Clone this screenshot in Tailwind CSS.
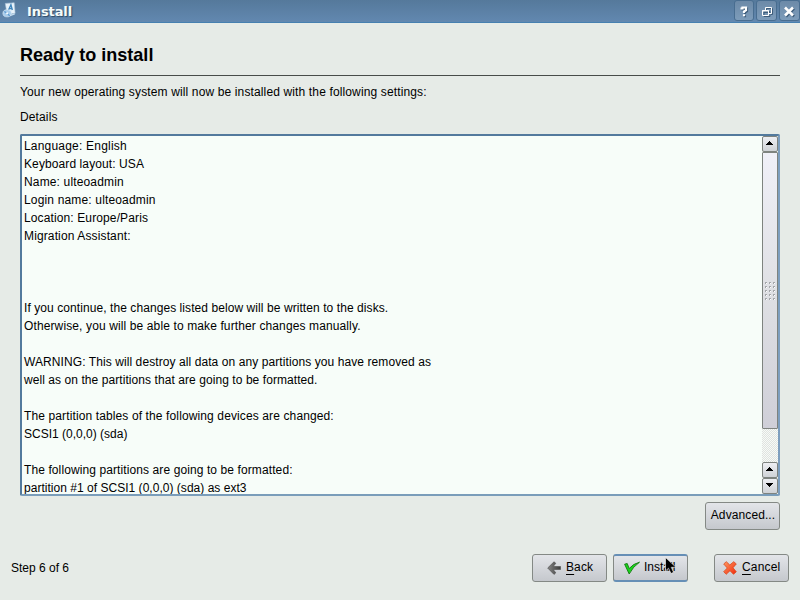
<!DOCTYPE html>
<html lang="en">
<head>
<meta charset="utf-8">
<title>Install</title>
<script src="https://cdn.jsdelivr.net/npm/@tailwindcss/browser@4"></script>
</head>
<body class="relative flex h-[600px] w-[800px] flex-col overflow-hidden bg-[#e6ebe7] font-['Liberation_Sans',Arial,sans-serif] text-[12px] leading-[18px] text-black">
  <header class="flex h-[23px] shrink-0 items-start border-b border-[#4680b0] bg-linear-to-b from-[#55799b] to-[#6288b0] pl-[2px]">
    <svg class="mt-[2px] h-[16px] w-[15px]" viewBox="0 0 15 17">
      <path d="M3 1.500 12.500.8 13.500 12 5 13z" fill="#e8f2fa" stroke="#a9c2d8" stroke-width=".6"/>
      <path d="M6.500 8.500 9 3l1.500 5.500M7.500 7h3" fill="none" stroke="#3f86bd" stroke-width="1.500"/>
      <ellipse cx="5" cy="12" rx="4.500" ry="3.800" fill="#a8cdec" stroke="#dbeaf6" stroke-width=".7"/>
      <path d="M2 10l3 2 3 3" stroke="#5f9bd0" stroke-width="1.300" fill="none"/>
      <circle cx="5" cy="12" r="1.200" fill="#f5faff"/>
      <path d="M8 14.500l5-2" stroke="#c5dcee" stroke-width="1.400"/>
    </svg>
    <h1 class="ml-[10px] flex-1 pt-px font-['DejaVu_Sans',sans-serif] text-[13px] leading-[22px] font-bold tracking-[-0.1px] text-[#f4fbfa] [text-shadow:1px_1px_1px_#2d4a66]">Install</h1>
    <div class="flex gap-[2px]">
      <button class="h-[21px] w-[20px] rounded-[3px] border border-[#486d90] bg-linear-to-b from-[#6c8aa8] to-[#7d9cba]"><svg viewBox="0 0 18 18" class="size-[18px]"><path d="M5.500 6.500h2V5.500h3.500v2.700L9 9.500V11M9 12.200v2" transform="translate(1 1)" fill="none" stroke="#3d5c7a" stroke-width="2.200"/><path d="M5.500 6.500h2V5.500h3.500v2.700L9 9.500V11M9 12.200v2" fill="none" stroke="#fff" stroke-width="2.200"/></svg></button>
      <button class="h-[21px] w-[21px] rounded-[3px] border border-[#486d90] bg-linear-to-b from-[#6c8aa8] to-[#7d9cba]"><svg viewBox="0 0 18 18" class="ml-px size-[18px]"><path d="M7.500 7V5.500h6v6H12M5 8.500h6v5H5zM5 9.500h6" transform="translate(1 1)" fill="none" stroke="#3d5c7a"/><path d="M7.500 8V5.500h6v6H11M4.500 8.500h6v5h-6zM4 9h7" fill="none" stroke="#fff"/></svg></button>
      <button class="h-[21px] w-[21px] rounded-[3px] border border-[#486d90] bg-linear-to-b from-[#6c8aa8] to-[#7d9cba]"><svg viewBox="0 0 18 18" class="size-[18px]"><path d="M5 5.500l8 8M13 5.500l-8 8" transform="translate(1 1)" stroke="#3d5c7a" stroke-width="2.600"/><path d="M5 5.500l8 8M13 5.500l-8 8" stroke="#fff" stroke-width="2.600"/></svg></button>
    </div>
  </header>

  <main class="flex h-[507px] shrink-0 flex-col px-5">
    <h2 class="flex h-[53px] items-end border-b border-[#484c49] pb-[9px] text-[19px] leading-[22px] font-bold"><span class="origin-left scale-x-[0.95]">Ready to install</span></h2>
    <p class="mt-[7px] tracking-[0.135px] whitespace-nowrap">Your new operating system will now be installed with the following settings:</p>
    <p class="mt-[7px] tracking-[0.13px]">Details</p>
    <section class="mt-[8px] flex h-[362px] w-[760px] shrink-0 rounded-[2px] border-2 border-t-[#537a9d] border-r-[#7d9ebe] border-b-[#7a9dba] border-l-[#537a9d] bg-[#f7fdf9]">
      <div class="h-[358px] flex-1 overflow-hidden pt-px pl-[2px] whitespace-nowrap">
        <p class="tracking-[0.2px]">Language: English</p>
        <p class="tracking-[0.1px]">Keyboard layout: USA</p>
        <p class="tracking-[0.15px]">Name: ulteoadmin</p>
        <p class="tracking-[0.16px]">Login name: ulteoadmin</p>
        <p class="tracking-[0.12px]">Location: Europe/Paris</p>
        <p class="tracking-[0.13px]">Migration Assistant:</p>
        <p class="mt-[54px] tracking-[0.075px]">If you continue, the changes listed below will be written to the disks.</p>
        <p class="tracking-[0.12px]">Otherwise, you will be able to make further changes manually.</p>
        <p class="mt-[18px] tracking-[0.085px]">WARNING: This will destroy all data on any partitions you have removed as</p>
        <p class="tracking-[0.07px]">well as on the partitions that are going to be formatted.</p>
        <p class="mt-[18px] tracking-[0.12px]">The partition tables of the following devices are changed:</p>
        <p>SCSI1 (0,0,0) (sda)</p>
        <p class="mt-[18px] tracking-[0.1px]">The following partitions are going to be formatted:</p>
        <p class="tracking-[0.025px]">partition #1 of SCSI1 (0,0,0) (sda) as ext3</p>
      </div>
      <div class="flex w-4 flex-col bg-[conic-gradient(#dfe3e0_25%,#f7faf7_0_50%,#dfe3e0_0_75%,#f7faf7_0)] bg-[length:2px_2px]">
        <div class="flex h-4 items-center justify-center rounded-[2px] border border-[#7e837f] bg-linear-to-b from-[#eeeff3] to-[#cfd2d6] pr-px pb-[2px]"><svg class="h-1 w-[7px]" viewBox="0 0 7 4" shape-rendering="crispEdges"><path d="M3 0h1v1h1v1h1v1h1v1H0V3h1V2h1V1h1z"/></svg></div>
        <div class="flex h-[277px] items-center justify-center rounded-[1px] border border-[#7e837f] bg-linear-to-b from-[#f0f0f8] from-0% via-[#dfe0e4] via-50% to-[#cfcfd8]">
          <svg class="mt-[2px] h-[19px] w-[11px]" viewBox="0 0 11 19" shape-rendering="crispEdges"><defs><pattern id="grip" width="4" height="4" patternUnits="userSpaceOnUse"><path d="M0 0h2v1H1v1H0z" fill="#a4a6aa"/><path d="M1 1h1v1H1z" fill="#fff"/></pattern></defs><path d="M0 0h11v19H0z" fill="url(#grip)"/></svg>
        </div>
        <div class="flex-1"></div>
        <div class="flex h-4 items-center justify-center rounded-[2px] border border-[#7e837f] bg-linear-to-b from-[#eeeff3] to-[#cfd2d6] pr-px pb-[2px]"><svg class="h-1 w-[7px]" viewBox="0 0 7 4" shape-rendering="crispEdges"><path d="M3 0h1v1h1v1h1v1h1v1H0V3h1V2h1V1h1z"/></svg></div>
        <div class="flex h-4 items-center justify-center rounded-[2px] border border-[#7e837f] bg-linear-to-b from-[#eeeff3] to-[#cfd2d6] pr-px pb-[2px]"><svg class="h-1 w-[7px] rotate-180" viewBox="0 0 7 4" shape-rendering="crispEdges"><path d="M3 0h1v1h1v1h1v1h1v1H0V3h1V2h1V1h1z"/></svg></div>
      </div>
    </section>
    <button class="mt-[6px] h-[28px] w-[75px] shrink-0 self-end rounded-[3px] border border-[#848985] bg-linear-to-b from-[#e3e5e9] to-[#c5c8cd] pb-[2px] pl-px tracking-[0.1px] whitespace-nowrap">Advanced...</button>
  </main>

  <footer class="flex items-center pt-[24px] pl-[11px]">
    <span class="w-[521px]">Step 6 of 6</span>
    <button class="flex h-[28px] w-[75px] items-center rounded-[3px] border border-[#848985] bg-linear-to-b from-[#e3e5e9] to-[#c5c8cd] pl-[14px]">
      <svg class="mr-[5px] h-[14px] w-[14px] shrink-0" viewBox="0 0 14 14"><defs><linearGradient id="arrow"><stop stop-color="#858585"/><stop offset="1" stop-color="#3a3a3a"/></linearGradient></defs><path d="M.7 7 7 .8l1.800 1.500L6.200 5.500h7.300v3H6.200l2.600 3.300L7 13.400z" fill="url(#arrow)" stroke="#555" stroke-width=".7"/></svg>
      <span class="pb-[2px] tracking-[0.1px]"><span class="underline underline-offset-[3px]">B</span>ack</span>
    </button>
    <button class="ml-[6px] flex h-[28px] w-[75px] items-center rounded-[3px] border-x border-y-2 border-x-[#848985] border-y-[#668fb6] bg-linear-to-b from-[#e3e5e9] to-[#c5c8cd] pl-[10px]">
      <svg class="mr-[4px] h-[14px] w-[16px] shrink-0" viewBox="0 0 16 14"><path d="M.6 3.200 3.200 2.500 5.200 7.500Q9 2.800 15.500 1.200 9 5.500 5.200 13z" fill="#19d51c" stroke="#12790f" stroke-width=".9" stroke-linejoin="round"/></svg>
      <span class="pb-[2px]">Install</span>
    </button>
    <button class="ml-[26px] flex h-[28px] w-[75px] items-center rounded-[3px] border border-[#848985] bg-linear-to-b from-[#e3e5e9] to-[#c5c8cd] pl-[8px]">
      <svg class="mr-[5px] h-[14px] w-[14px] shrink-0" viewBox="0 0 14 14"><defs><linearGradient id="cross" x2="1" y2="1"><stop stop-color="#ff9a62"/><stop offset="1" stop-color="#f1280c"/></linearGradient></defs><path d="M.7 3 3.300.7 6.800 4 10.700.7l2.600 2.200L10 6.800l3.300 4-2.800 2.500L7 9.700l-3.800 3.600L.7 10.700 4.300 7z" fill="url(#cross)" stroke="#d94a20" stroke-width=".8" stroke-linejoin="round"/></svg>
      <span class="pb-[2px] tracking-[0.15px]"><span class="underline underline-offset-[3px]">C</span>ancel</span>
    </button>
  </footer>

  <svg class="absolute top-[557px] left-[665px] h-[17px] w-[12px]" viewBox="0 0 12 17"><path d="M.5.500v13.500l3-2.800 2.500 5.300 2.600-1.200-2.400-5h4.800z" fill="#000" stroke="#fff" stroke-width=".6"/></svg>
</body>
</html>
